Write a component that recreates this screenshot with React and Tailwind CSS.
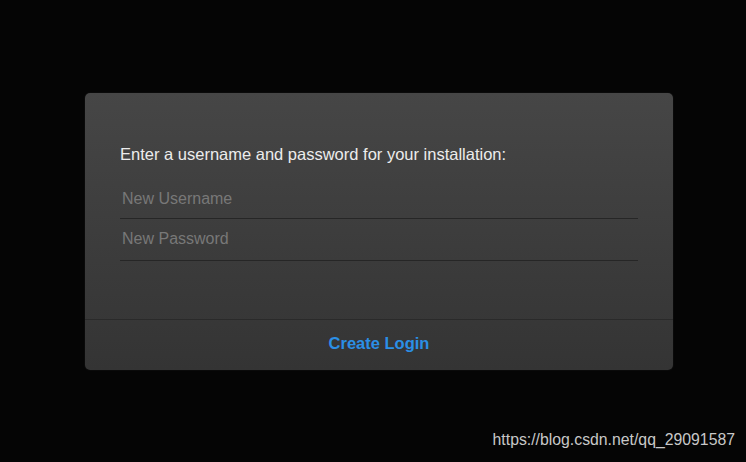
import React, { useState } from 'react';

const App = () => {
  const [username, setUsername] = useState('');
  const [password, setPassword] = useState('');

  return (
    <div
      className="relative min-h-[462px] w-full bg-[#050505] pt-[93px] pl-[85px]"
      style={{ fontFamily: '"Liberation Sans", Arial, sans-serif' }}
    >
      <div className="w-[588px] rounded-[5px] bg-gradient-to-b from-[#464646] to-[#343434] shadow-[0_0_0_1px_#0a0a0a]">
        <div className="px-[35px] pt-[52px] pb-[58px]">
          <p className="text-[16.5px] leading-[18px] text-[#ececec]">
            Enter a username and password for your installation:
          </p>
          <div className="mt-[15px]">
            <input
              value={username}
              onChange={(e) => setUsername(e.target.value)}
              placeholder="New Username"
              className="block h-[41px] w-full border-b border-[#262626] bg-transparent px-[2px] pt-[1px] text-[16px] text-[#ddd] placeholder:text-[#787878] focus:outline-none"
            />
            <input
              type="password"
              value={password}
              onChange={(e) => setPassword(e.target.value)}
              placeholder="New Password"
              className="block h-[42px] w-full border-b border-[#262626] bg-transparent px-[2px] pb-[2px] text-[16px] text-[#ddd] placeholder:text-[#787878] focus:outline-none"
            />
          </div>
        </div>
        <div className="flex h-[51px] items-center justify-center border-t border-[#2a2a2a] pb-[3px]">
          <button className="text-[16.5px] font-bold text-[#2b8fe6]">Create Login</button>
        </div>
      </div>
      <div className="absolute right-[11px] bottom-[10px] text-[15.8px] text-[#c8c8c8]">
        https://blog.csdn.net/qq_29091587
      </div>
    </div>
  );
};

export default App;
